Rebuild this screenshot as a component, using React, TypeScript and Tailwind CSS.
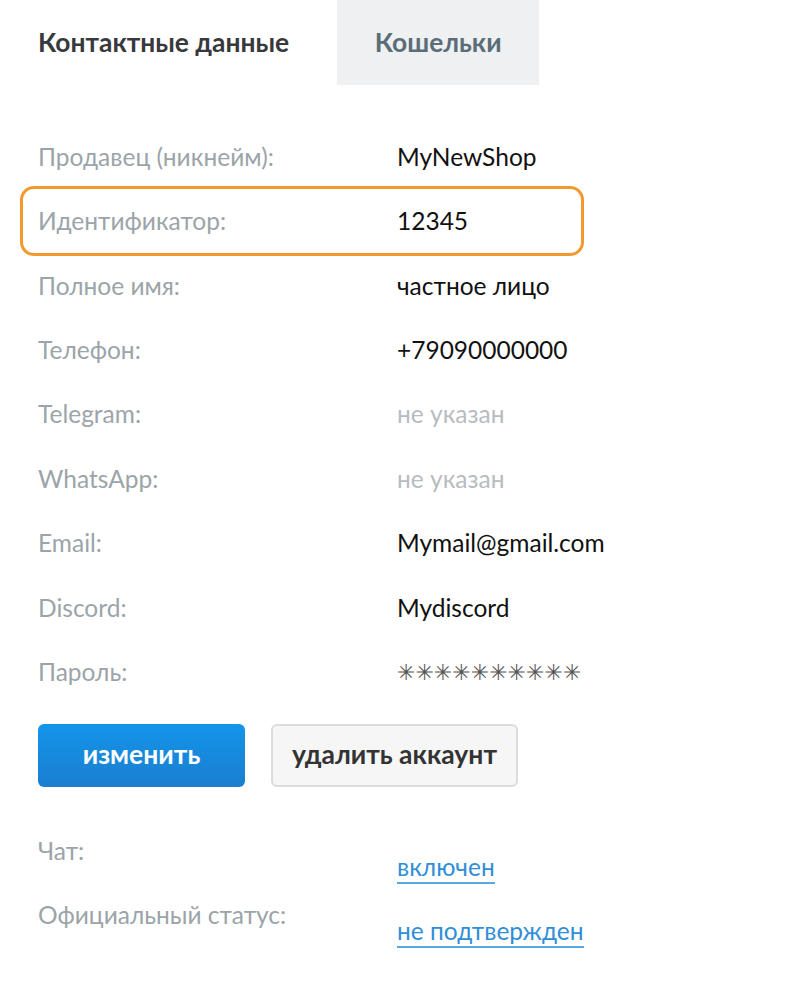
import React from 'react'

const rows: { label: string; value: string; muted?: boolean; highlight?: boolean }[] = [
  { label: 'Продавец (никнейм):', value: 'MyNewShop' },
  { label: 'Идентификатор:', value: '12345', highlight: true },
  { label: 'Полное имя:', value: 'частное лицо' },
  { label: 'Телефон:', value: '+79090000000' },
  { label: 'Telegram:', value: 'не указан', muted: true },
  { label: 'WhatsApp:', value: 'не указан', muted: true },
  { label: 'Email:', value: 'Mymail@gmail.com' },
  { label: 'Discord:', value: 'Mydiscord' },
]

export default function App() {
  return (
    <main className="min-h-screen w-[794px] bg-white font-['Lato','Noto_Sans',sans-serif]">
      {/* Tabs */}
      <div className="flex h-[85px] items-center pl-[38px]">
        <div className="text-[26.4px] font-bold text-[#37393c]">Контактные данные</div>
        <div className="ml-[48px] flex h-full w-[202px] items-center justify-center bg-[#eef0f2] text-[26.4px] font-bold text-[#5b6d77]">
          Кошельки
        </div>
      </div>

      {/* Details */}
      <div className="mt-[40px] px-[38px]">
        {rows.map((r) => (
          <div key={r.label} className="relative flex h-[64.4px] items-center text-[24.5px]">
            {r.highlight && (
              <span className="absolute -top-[3px] -bottom-[2px] -left-[18px] w-[564px] rounded-[14px] border-[3px] border-[#f29a2e]" />
            )}
            <div className="w-[359px] text-[#9ba4a9]">{r.label}</div>
            <div className={r.muted ? 'text-[#b7bcbf]' : 'text-[#111111]'}>{r.value}</div>
          </div>
        ))}
        <div className="flex h-[64.4px] items-center text-[24.5px]">
          <div className="w-[359px] text-[#9ba4a9]">Пароль:</div>
          <div className="font-['DejaVu_Sans',sans-serif] text-[22px] text-[#555]">
            ✳︎✳︎✳︎✳︎✳︎✳︎✳︎✳︎✳︎✳︎
          </div>
        </div>

        {/* Buttons */}
        <div className="mt-[19px] flex gap-[26px]">
          <button className="h-[63px] w-[207px] rounded-[6px] bg-gradient-to-b from-[#1295ea] to-[#1a7ecf] text-[26.5px] font-bold text-white">
            изменить
          </button>
          <button className="h-[63px] w-[247px] rounded-[6px] border-2 border-[#dcdcdc] bg-[#f6f6f6] text-[26.5px] font-bold text-[#333]">
            удалить аккаунт
          </button>
        </div>

        {/* Status */}
        <div className="mt-[46px]">
          <div className="flex h-[64px] text-[24.5px]">
            <div className="w-[359px] text-[#9ba4a9]">Чат:</div>
            <div className="pt-[16px]">
              <span className="border-b-2 border-[#5aa8e2] pb-[1px] text-[#2f8ed7]">включен</span>
            </div>
          </div>
          <div className="flex h-[64px] text-[24.5px]">
            <div className="w-[359px] text-[#9ba4a9]">Официальный статус:</div>
            <div className="pt-[16px]">
              <span className="border-b-2 border-[#5aa8e2] pb-[1px] text-[#2f8ed7]">не подтвержден</span>
            </div>
          </div>
        </div>
      </div>
    </main>
  )
}
